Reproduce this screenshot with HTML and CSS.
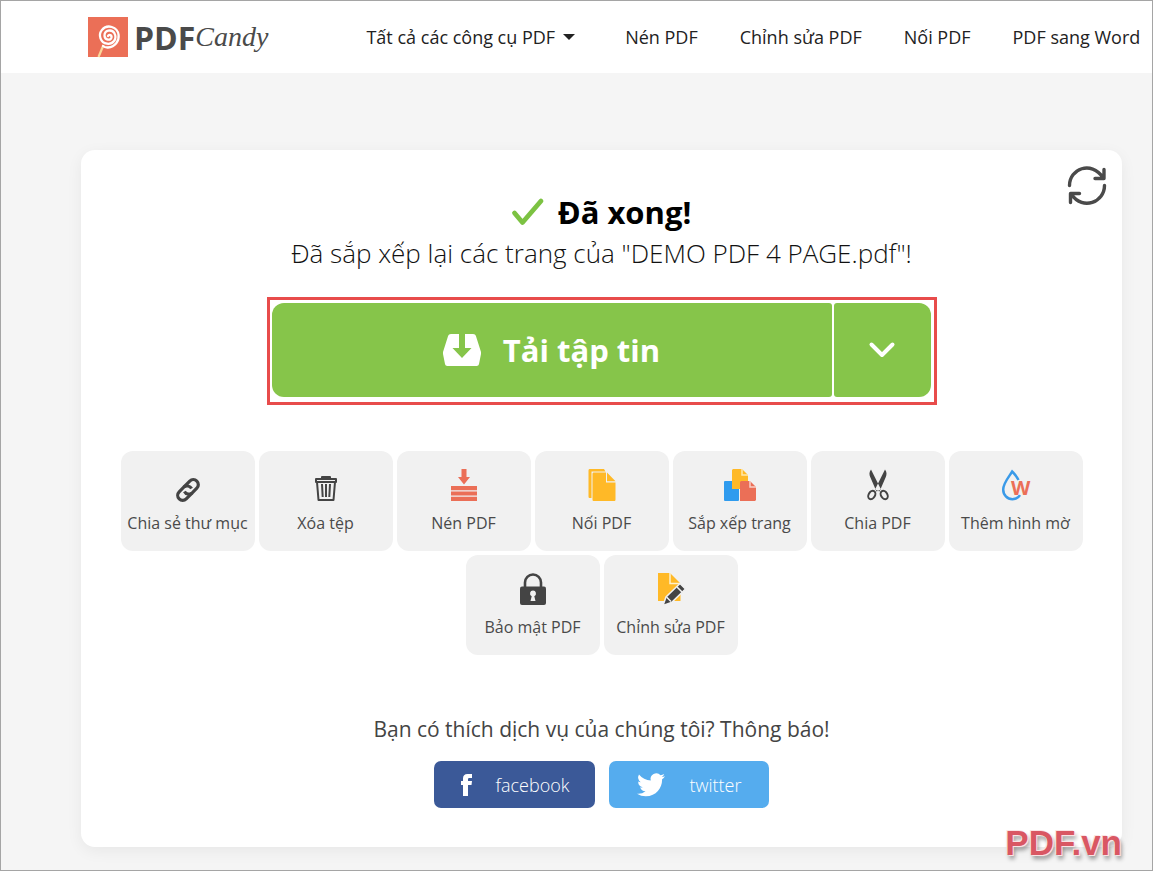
FILE: index.html
```html
<!DOCTYPE html>
<html lang="vi">
<head>
    <meta charset="UTF-8">
    <meta name="viewport" content="width=device-width, initial-scale=1.0">
    <title>PDF Candy</title>
    <link rel="stylesheet" href="styles.css">
</head>
<body>
    <header class="header">
        <a class="logo" href="#">
            <svg class="logo-icon" viewBox="0 0 40 40" aria-hidden="true">
                <rect width="40" height="40" fill="#eb6f57"/>
                <path d="M15.500 28L10.500 40" stroke="#fbd79a" stroke-width="2.200"/>
                <path d="M20 19c1-2 4-1 3.500 1.500-.8 3.400-6.700 2.800-7-1.700-.2-5.500 7-7.200 9.900-2.600 3.300 5.800-1.800 11.300-7.400 10.500-6.600-1-9-8.800-5.200-13.600 5.300-6.500 15.700-3.400 16.800 4.900.7 6-3.400 12-10.600 12.500-2 .1-3.800-.4-5-1.500" fill="none" stroke="#fff" stroke-width="2.300" stroke-linecap="round"/>
            </svg>
            <span class="logo-pdf">PDF</span><span class="logo-candy">Candy</span>
        </a>
        <nav class="nav">
            <button class="nav-menu" type="button">Tất cả các công cụ PDF<span class="caret"></span></button>
            <a href="#">Nén PDF</a>
            <a href="#">Chỉnh sửa PDF</a>
            <a href="#">Nối PDF</a>
            <a href="#">PDF sang Word</a>
        </nav>
    </header>

    <main class="card">
        <button class="restart" type="button" aria-label="Bắt đầu lại">
            <svg viewBox="0 0 40 40" fill="none" stroke="#4a4a4a" stroke-width="3.400" stroke-linecap="round" stroke-linejoin="round">
                <path d="M2.500 19.500C2.500 3 24-6 36 11.500M37 3.500v9h-9"/>
                <path d="M37.500 19.500C37.500 36 16 45 4.500 28.500M3.500 36.500v-9h9"/>
            </svg>
        </button>

        <h1 class="title">
            <svg class="check" viewBox="0 0 32 28" aria-hidden="true">
                <path d="M2.500 15L10.500 24.500 29 3" fill="none" stroke="#7cc242" stroke-width="4.800" stroke-linecap="round" stroke-linejoin="round"/>
            </svg>
            Đã xong!
        </h1>
        <p class="subtitle">Đã sắp xếp lại các trang của "DEMO PDF 4 PAGE.pdf"!</p>

        <div class="download">
            <button class="download-main" type="button">
                <svg viewBox="0 0 38 32" aria-hidden="true">
                    <path d="M8 0h8v14H9.500L19 24l9.500-10H22V0h8c1.500 0 2.500.8 3 2.200l5 15.800v2l-2 10c-.3 1.300-1 2-2.500 2h-29C3 32 2.300 31.300 2 30L0 20v-2L5 2.200C5.500.8 6.500 0 8 0z" fill="#fff"/>
                </svg>
                Tải tập tin
            </button>
            <button class="download-more" type="button" aria-label="Thêm tùy chọn">
                <svg viewBox="0 0 26 16" aria-hidden="true">
                    <path d="M2.500 2.500L13 13 23.500 2.500" fill="none" stroke="#fff" stroke-width="4" stroke-linecap="round" stroke-linejoin="round"/>
                </svg>
            </button>
        </div>

        <div class="tools">
            <a class="tool" href="#">
                <svg viewBox="0 0 32 32" fill="none" stroke="#444" stroke-width="3.200">
                    <g transform="rotate(-45 16 21)">
                        <path d="M17 26H8.500a5 5 0 0 1 0-10H15a5 5 0 0 1 4.500 6.500"/>
                        <path d="M15 16h8.500a5 5 0 0 1 0 10H17a5 5 0 0 1-4.500-6.500"/>
                    </g>
                </svg>
                Chia sẻ thư mục
            </a>
            <a class="tool" href="#">
                <svg viewBox="0 0 32 32" fill="none" stroke="#444" stroke-width="2" stroke-linejoin="round">
                    <path d="M6 10h20v3H6zM12 10V8h8v2M7 13l1.500 18h15L25 13M12 15l.7 13M16 15v13M20 15l-.7 13"/>
                </svg>
                Xóa tệp
            </a>
            <a class="tool" href="#">
                <svg viewBox="0 0 32 32" fill="#eb6f57">
                    <path d="M13.500 0h5v8H22l-6 7.500L10 8h3.500zM3 17h26v4.300H3zM3 22.500h26v4H3zM3 27.700h26V32H3z"/>
                </svg>
                Nén PDF
            </a>
            <a class="tool" href="#">
                <svg viewBox="0 0 32 32" fill="#ffb927">
                    <path d="M4 0h14l1.500 2.500H5.500V29H4c-1 0-1.500-.5-1.500-1.500v-26C2.500.5 3 0 4 0z"/>
                    <path d="M8 3.500h12v10h9.500V30.500c0 1-.5 1.500-1.500 1.500H8C7 32 6.500 31.500 6.500 30.500V5C6.500 4 7 3.500 8 3.500zM21 3.500l8.500 8.800H21z"/>
                </svg>
                Nối PDF
            </a>
            <a class="tool" href="#">
                <svg viewBox="0 0 32 32">
                    <rect y="12" width="15" height="20" rx="1" fill="#2f9bee"/>
                    <path d="M9 0h9l6 6v14H8V1z" fill="#ffb927"/>
                    <path d="M18 0v6h6" fill="none" stroke="#ffe7ad" stroke-width="1.500"/>
                    <path d="M17 12h9l6 6v13l-1 1H16V13z" fill="#eb6f57"/>
                    <path d="M26 12v6h6" fill="none" stroke="#f8cfc6" stroke-width="1.500"/>
                    <path d="M15.500 32V20" stroke="#f1f1f1"/>
                </svg>
                Sắp xếp trang
            </a>
            <a class="tool" href="#">
                <svg viewBox="0 0 32 32" fill="#444">
                    <path d="M9 .5C7 3 7.200 5.500 8.200 8L14.500 22.500l4.500-2zM23 .5c2 2.500 1.800 5 .8 7.500L17.500 22.500l-4.500-2z"/>
                    <ellipse cx="9.800" cy="26" rx="3.200" ry="4.500" transform="rotate(30 9.800 26)" fill="none" stroke="#444" stroke-width="2"/>
                    <ellipse cx="22.200" cy="26" rx="3.200" ry="4.500" transform="rotate(-30 22.200 26)" fill="none" stroke="#444" stroke-width="2"/>
                </svg>
                Chia PDF
            </a>
            <a class="tool" href="#">
                <svg viewBox="0 0 32 32">
                    <path d="M18.500 11C16.500 7 14 4.500 12.200 2.500 9.500 7 3.200 14 3.200 20.500c0 5.500 4 9.700 9.300 9.700 3.500 0 6-1.500 7.500-4" fill="none" stroke="#3a9ae8" stroke-width="2.500"/>
                    <text x="11" y="26" class="icon-letter" fill="#eb6f57">W</text>
                </svg>
                Thêm hình mờ
            </a>
            <a class="tool" href="#">
                <svg viewBox="0 0 32 32">
                    <path d="M8 15V9.500a8 8 0 0 1 16 0V15" fill="none" stroke="#444" stroke-width="2.600"/>
                    <rect x="3" y="13.500" width="26" height="18.500" rx="2" fill="#444"/>
                    <path d="M16 17.500a3 3 0 0 1 1.300 5.700L18.500 28h-5l1.200-4.800A3 3 0 0 1 16 17.500z" fill="#f1f1f1"/>
                </svg>
                Bảo mật PDF
            </a>
            <a class="tool" href="#">
                <svg viewBox="0 0 32 32">
                    <path d="M3 0h12l10.500 10.500V28H3z" fill="#ffb927"/>
                    <path d="M15 0v10.500h10.500" fill="none" stroke="#fff1cc" stroke-width="1.500"/>
                    <path d="M8 32.500l3-8.500L25 10.500l5.500 5.500L16.500 29.500z" fill="#444" stroke="#f1f1f1" stroke-width="1.500"/>
                    <path d="M22 14l5 5M11.500 24l4.500 4.500" stroke="#f1f1f1" stroke-width="1.500"/>
                </svg>
                Chỉnh sửa PDF
            </a>
        </div>

        <p class="share-text">Bạn có thích dịch vụ của chúng tôi? Thông báo!</p>
        <div class="share">
            <a class="share-button facebook" href="#">
                <svg width="12" height="24" viewBox="0 0 12 24" fill="#fff" aria-hidden="true">
                    <path d="M3 23V12H1V8h2V5.500C3 2.500 4.500 1 7.500 1H12v4H9.500C8.300 5 8 5.500 8 6.500V8h4l-.5 4H8v11z"/>
                </svg>
                facebook
            </a>
            <a class="share-button twitter" href="#">
                <svg width="28" height="24" viewBox="0 0 24 20" fill="#fff" aria-hidden="true">
                    <path d="M24 2.400a10 10 0 0 1-2.800.8A5 5 0 0 0 23.300.5a10 10 0 0 1-3.100 1.200 4.900 4.900 0 0 0-8.400 4.500A14 14 0 0 1 1.700 1 4.900 4.900 0 0 0 3.200 7.600 4.900 4.900 0 0 1 1 7v.1a4.900 4.900 0 0 0 3.900 4.800 5 5 0 0 1-2.200.1 4.900 4.900 0 0 0 4.600 3.400A9.900 9.900 0 0 1 0 17.500a14 14 0 0 0 7.500 2.200c9.100 0 14-7.500 14-14V5A10 10 0 0 0 24 2.400z"/>
                </svg>
                twitter
            </a>
        </div>
    </main>

    <div class="watermark">PDF.vn</div>
</body>
</html>
```
FILE: styles.css
```css
* {
    box-sizing: border-box;
}

body {
    font-family: "Open Sans", "Noto Sans", sans-serif;
    margin: 0;
    min-height: 100vh;
    background-color: #f5f5f5;
    border: 1px solid #a5a5a5;
    position: relative;
}

a {
    color: inherit;
    text-decoration: none;
}

button {
    font: inherit;
    color: inherit;
    border: 0;
    padding: 0;
    background: none;
    cursor: pointer;
}

svg {
    display: block;
    flex: none;
    overflow: visible;
}

/* header */
.header {
    display: flex;
    align-items: center;
    gap: 98px;
    height: 72px;
    padding-left: 87px;
    background: #fff;
    white-space: nowrap;
}

.logo {
    display: flex;
    align-items: center;
    color: #4a4a4a;
}

.logo-icon {
    width: 40px;
    height: 40px;
    margin-right: 6px;
}

.logo-pdf {
    font-size: 32px;
    font-weight: 700;
}

.logo-candy {
    font-family: "Liberation Serif", serif;
    font-size: 28px;
    font-style: italic;
}

.nav {
    display: flex;
    gap: 42px;
    font-size: 18px;
    color: #222;
}

.nav-menu {
    display: flex;
    align-items: center;
    gap: 8px;
    margin-right: 8px;
}

.caret {
    border: 6px solid transparent;
    border-top-color: #222;
    border-bottom: 0;
}

/* result card */
.card {
    position: relative;
    margin: 77px 30px 23px 80px;
    padding: 40px 30px 39px;
    background: #fff;
    border-radius: 14px;
    box-shadow: 0 4px 16px rgba(0, 0, 0, 0.06);
    text-align: center;
}

.restart {
    position: absolute;
    top: 16px;
    right: 15px;
    width: 40px;
    height: 40px;
}

.restart svg {
    width: 40px;
    height: 40px;
}

.title {
    display: flex;
    align-items: center;
    justify-content: center;
    gap: 14px;
    margin: 0;
    font-size: 31px;
    line-height: 44px;
    color: #000;
}

.check {
    width: 32px;
    height: 28px;
}

.subtitle {
    margin: 0;
    font-size: 26px;
    font-weight: 300;
    line-height: 38px;
    color: #111;
}

.download {
    display: flex;
    gap: 2px;
    max-width: 670px;
    height: 108px;
    margin: 25px auto 46px;
    padding: 3px 3px 5px 2px;
    border: 3px solid #e84c4b;
}

.download button {
    display: flex;
    align-items: center;
    justify-content: center;
    background: #86c54a;
    color: #fff;
}

.download .download-main {
    flex: 1;
    gap: 22px;
    border-radius: 12px 3px 3px 12px;
    font-size: 31px;
    font-weight: 700;
}

.download-main svg {
    width: 38px;
    height: 32px;
}

.download .download-more {
    width: 97px;
    border-radius: 3px 12px 12px 3px;
}

.download-more svg {
    width: 26px;
    height: 16px;
}

/* tools */
.tools {
    display: flex;
    flex-wrap: wrap;
    justify-content: center;
    gap: 4px;
}

.tool {
    display: flex;
    flex-direction: column;
    align-items: center;
    gap: 10px;
    width: 134px;
    height: 100px;
    padding-top: 18px;
    border-radius: 12px;
    background: #f1f1f1;
    color: #4a4a4a;
    font-size: 16px;
    line-height: 24px;
    white-space: nowrap;
}

.tool svg {
    width: 32px;
    height: 32px;
}

.icon-letter {
    font-size: 20px;
    font-weight: 700;
}

/* share */
.share-text {
    margin: 59px 0 17px;
    font-size: 21px;
    line-height: 30px;
    color: #444;
}

.share {
    display: flex;
    justify-content: center;
    gap: 14px;
}

.share-button {
    display: flex;
    align-items: center;
    justify-content: center;
    gap: 24px;
    min-width: 160px;
    height: 47px;
    padding: 0 26px;
    border-radius: 7px;
    color: #fff;
    font-size: 18px;
    font-weight: 300;
}

.facebook {
    background: #3b5998;
}

.twitter {
    background: #55acee;
}

.watermark {
    position: absolute;
    right: 30px;
    bottom: 7px;
    font-family: "Liberation Sans", sans-serif;
    font-size: 35px;
    font-weight: 700;
    line-height: 40px;
    color: #d95763;
    text-shadow: 1px 1px 0 #fbe3e4, -1px -1px 0 #fbe3e4, 2px 4px 4px rgba(0, 0, 0, 0.4);
}
```
